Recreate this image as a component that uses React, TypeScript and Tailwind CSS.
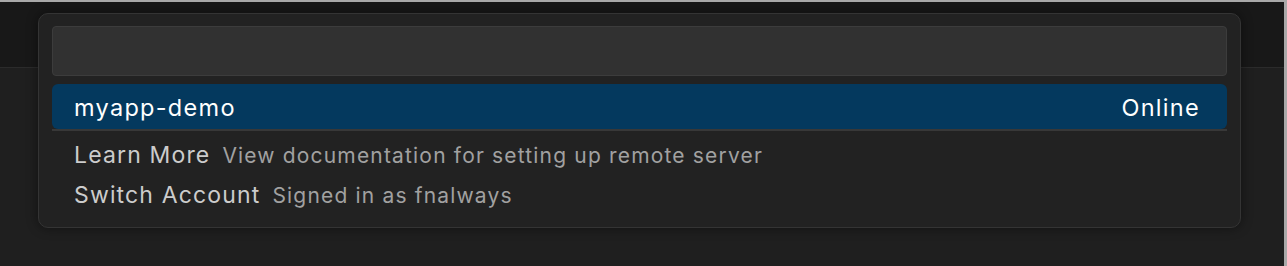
const items = [
  { label: 'Learn More', description: 'View documentation for setting up remote server' },
  { label: 'Switch Account', description: 'Signed in as fnalways' },
]

export default function App() {
  return (
    <div
      className="relative h-[266px] w-[1287px] overflow-hidden border-t-2 border-r-[3px] border-[#a9a9a9] bg-[#1f1f1f]"
      style={{ fontFamily: 'Inter, "Noto Sans", sans-serif' }}
    >
      <div className="h-[66px] border-b border-[#2b2b2b] bg-[#181818]" />

      <div className="absolute left-[38px] top-[11px] w-[1203px] rounded-[10px] border border-[#343434] bg-[#222222] px-[13px] pb-[12px] pt-[12px] shadow-[0_0_12px_rgba(0,0,0,0.45)]">
        <div className="h-[50px] rounded-[4px] border border-[#3c3c3c] bg-[#313131]" />

        <div className="mt-[8px] border-b-2 border-[#383838]">
          <div className="flex h-[45px] items-center justify-between rounded-[6px] bg-[#04395e] px-[22px] pt-[2px] text-[23.5px] tracking-[0.055em] text-white">
            <span>myapp-demo</span>
            <span className="pr-[5px]">Online</span>
          </div>
        </div>

        <div className="mt-[4px]">
          {items.map((item) => (
            <div key={item.label} className="flex h-[40px] items-center gap-[12px] px-[22px] pt-[1px]">
              <span className="text-[23px] tracking-[0.05em] text-[#cccccc]">{item.label}</span>
              <span className="text-[21px] tracking-[0.056em] text-[#a1a1a1]">{item.description}</span>
            </div>
          ))}
        </div>
      </div>
    </div>
  )
}
